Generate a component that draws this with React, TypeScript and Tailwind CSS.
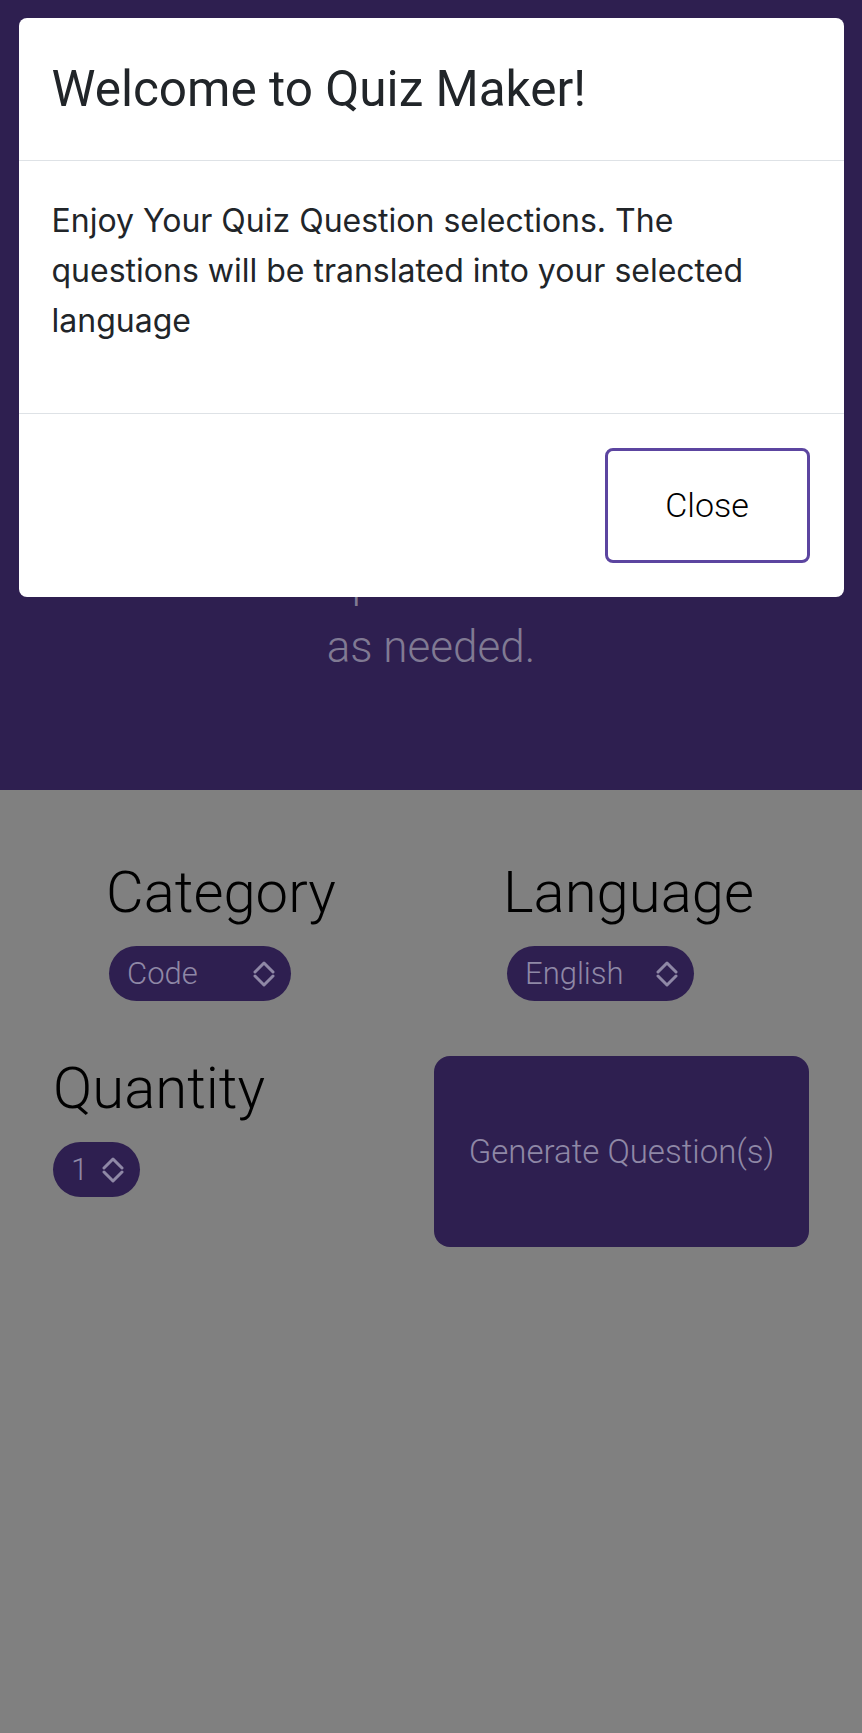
import { useState } from 'react';

function UpDownIcon() {
  return (
    <svg width="22" height="26" viewBox="0 0 22 26" fill="none" stroke="#8f88a6" strokeWidth="3" strokeLinecap="round" strokeLinejoin="round">
      <path d="M2 11 L11 2 L20 11" />
      <path d="M2 15 L11 24 L20 15" />
    </svg>
  );
}

function PillSelect({ value, width }: { value: string; width: string }) {
  return (
    <div className={`${width} h-[55px] rounded-full bg-[#2e1f50] pl-[18px] pr-[16px] flex items-center justify-between`}>
      <span className="text-[31px] leading-[55px] text-[#8f88a6] font-light">{value}</span>
      <UpDownIcon />
    </div>
  );
}

export default function App() {
  const [open, setOpen] = useState(true);

  return (
    <div className="relative min-h-[1733px] bg-[#808080] font-['Roboto',sans-serif] font-light">
      {/* hero */}
      <section className="h-[790px] bg-[#2e1f50] flex flex-col items-center justify-end pb-[110px] text-center">
        <h1 className="text-[80px] leading-[96px] text-[#807a93] mb-[40px]">Quiz Maker</h1>
        <p className="text-[44px] leading-[65px] text-[#807a93] px-[40px]">
          Pick a category, a language and a quantity to
          <br />
          grasp the material quickly. Simply swap questions
          <br />
          as needed.
        </p>
      </section>

      {/* form */}
      <main className="px-[53px] pt-[68px]">
        <div className="grid grid-cols-[1fr_375px]">
          <div className="pl-[56px]">
            <h2 className="-ml-[3px] text-[58px] leading-[68px] text-black mb-[20px]">Category</h2>
            <PillSelect value="Code" width="w-[182px]" />
          </div>
          <div className="pl-[73px]">
            <h2 className="-ml-[4px] text-[58px] leading-[68px] text-black mb-[20px]">Language</h2>
            <PillSelect value="English" width="w-[187px]" />
          </div>
        </div>

        <div className="grid grid-cols-[1fr_375px] mt-[53px]">
          <div>
            <h2 className="text-[58px] leading-[68px] text-black mb-[20px]">Quantity</h2>
            <PillSelect value="1" width="w-[87px]" />
          </div>
          <button className="mt-[2px] h-[191px] rounded-[16px] bg-[#2e1f50] text-[33px] text-[#8f88a6] font-light">
            Generate Question(s)
          </button>
        </div>
      </main>

      {/* welcome modal */}
      {open && (
        <div className="absolute inset-0 pt-[18px]">
          <div className="w-[825px] mx-auto bg-white rounded-[8px] text-[#212529]">
            <div className="px-[33px] py-[35px] border-b border-[#dee2e6]">
              <h5 className="font-['Roboto',sans-serif] text-[49.5px] leading-[72px] font-normal">Welcome to Quiz Maker!</h5>
            </div>
            <div className="px-[33px] pt-[35px] pb-[34px] border-b border-[#dee2e6]">
              <p className="font-['Inter',sans-serif] text-[32px] leading-[50px] font-normal mb-[33px]">
                Enjoy Your Quiz Question selections. The questions will be translated into your selected language
              </p>
            </div>
            <div className="flex justify-end p-[34px]">
              <button
                onClick={() => setOpen(false)}
                className="w-[205px] h-[115px] rounded-[8px] border-[3px] border-[#5c45a0] text-[34px] font-light text-black"
              >
                Close
              </button>
            </div>
          </div>
        </div>
      )}
    </div>
  );
}
